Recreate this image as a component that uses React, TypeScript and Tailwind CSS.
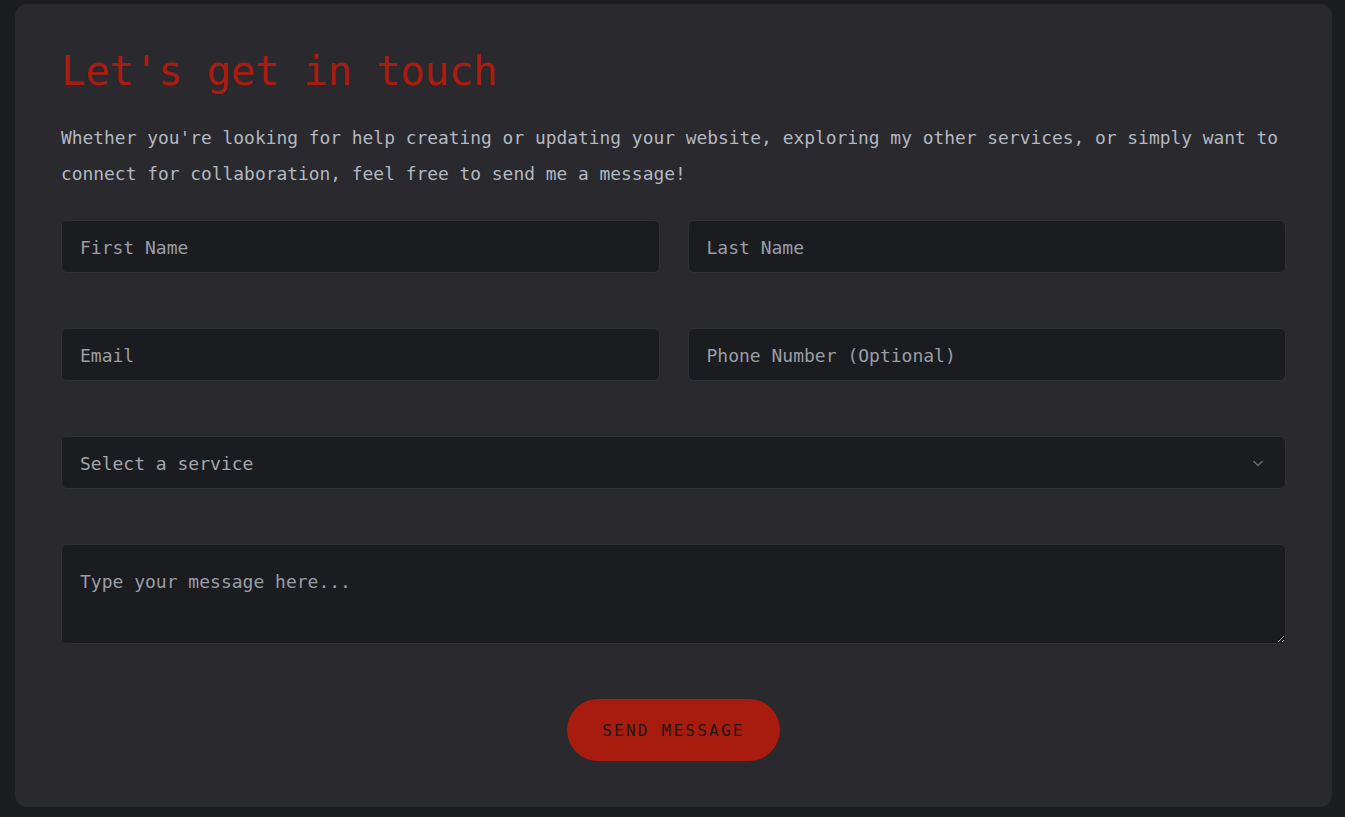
import React, { useState } from 'react';

const fieldBase =
  'w-full h-[53px] rounded-md border border-[#303137] bg-[#1b1c20] px-[18px] pt-[2px] text-[18px] placeholder:text-[#9a9ea6] outline-none';

export default function App() {
  const [service, setService] = useState('');

  return (
    <div
      className="min-h-screen bg-[#1b1d21] pl-[15px] pr-[13px] pt-1 pb-[11px]"
      style={{ fontFamily: '"DejaVu Sans Mono", "Liberation Mono", monospace' }}
    >
      <div className="rounded-xl bg-[#29292e] px-[46px] pt-[43px] pb-[46px]">
        <h1 className="text-[41px] leading-[48px] tracking-[-0.45px] text-[#a91c0f]">Let's get in touch</h1>
        <p className="mt-[25px] text-[17.9px] leading-[36px] text-[#b3b8c0]">
          Whether you're looking for help creating or updating your website, exploring my other services, or simply
          want to connect for collaboration, feel free to send me a message!
        </p>

        <form className="mt-[28px] grid grid-cols-2 gap-x-[28px] gap-y-[55px]" onSubmit={(e) => e.preventDefault()}>
          <input className={`${fieldBase} text-[#c9ccd2]`} placeholder="First Name" />
          <input className={`${fieldBase} text-[#c9ccd2]`} placeholder="Last Name" />
          <input className={`${fieldBase} text-[#c9ccd2]`} placeholder="Email" />
          <input className={`${fieldBase} text-[#c9ccd2]`} placeholder="Phone Number (Optional)" />

          <div className="relative col-span-2">
            <select
              value={service}
              onChange={(e) => setService(e.target.value)}
              className={`${fieldBase} appearance-none text-[#a3a7ae]`}
            >
              <option value="">Select a service</option>
              <option value="web">Website Design</option>
              <option value="dev">Web Development</option>
            </select>
            <svg
              className="pointer-events-none absolute right-[22px] top-[23px] h-[9px] w-[12px]"
              viewBox="0 0 12 9"
              fill="none"
              stroke="#6b6f78"
              strokeWidth="1.3"
            >
              <polyline points="1.5,2 6,6.5 10.5,2" />
            </svg>
          </div>

          <textarea
            className="col-span-2 h-[100px] rounded-md border border-[#303137] bg-[#1b1c20] px-[18px] pt-[24px] text-[18px] leading-[26px] text-[#c9ccd2] placeholder:text-[#9a9ea6] outline-none"
            placeholder="Type your message here..."
          />

          <div className="col-span-2 flex justify-center">
            <button
              type="submit"
              className="h-[62px] w-[213px] rounded-full bg-[#a81b0f] pt-[2px] text-[16px] font-medium tracking-[0.14em] text-[#1c1a1a]"
            >
              SEND MESSAGE
            </button>
          </div>
        </form>
      </div>
    </div>
  );
}
